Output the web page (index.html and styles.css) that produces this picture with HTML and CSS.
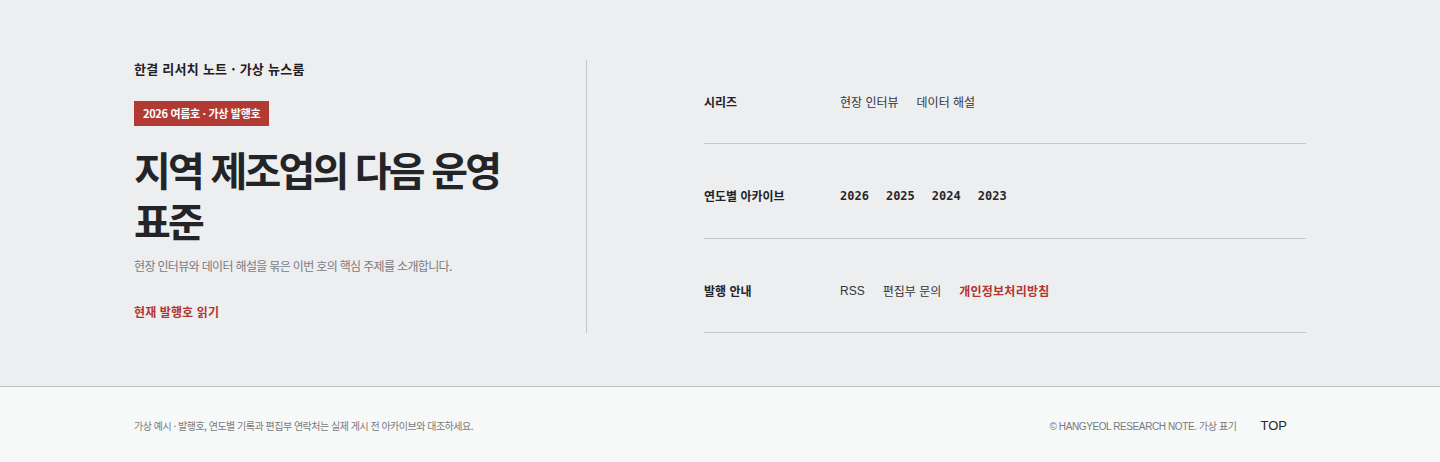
FILE: index.html
```html
<!DOCTYPE html>
<html lang="ko">
<head>
<meta charset="utf-8">
<title>한결 리서치 노트</title>
<link rel="stylesheet" href="styles.css">
</head>
<body>
<main class="hero">
  <div class="container grid">
    <section class="intro">
      <p class="brand">한결 리서치 노트 · 가상 뉴스룸</p>
      <span class="badge">2026 여름호 · 가상 발행호</span>
      <h1 class="title">지역 제조업의 다음 운영 표준</h1>
      <p class="lead">현장 인터뷰와 데이터 해설을 묶은 이번 호의 핵심 주제를 소개합니다.</p>
      <a class="cta" href="#">현재 발행호 읽기</a>
    </section>
    <nav class="index">
      <div class="row">
        <span class="label">시리즈</span>
        <div class="links">
          <a href="#">현장 인터뷰</a>
          <a href="#">데이터 해설</a>
        </div>
      </div>
      <div class="row">
        <span class="label">연도별 아카이브</span>
        <div class="links years">
          <a href="#">2026</a>
          <a href="#">2025</a>
          <a href="#">2024</a>
          <a href="#">2023</a>
        </div>
      </div>
      <div class="row">
        <span class="label">발행 안내</span>
        <div class="links">
          <a href="#" class="latin">RSS</a>
          <a href="#">편집부 문의</a>
          <a href="#" class="strong">개인정보처리방침</a>
        </div>
      </div>
    </nav>
  </div>
</main>
<footer class="footer">
  <div class="container foot">
    <p class="note">가상 예시 · 발행호, 연도별 기록과 편집부 연락처는 실제 게시 전 아카이브와 대조하세요.</p>
    <div class="foot-right">
      <span class="copy">© HANGYEOL RESEARCH NOTE. 가상 표기</span>
      <a href="#" class="top">TOP</a>
    </div>
  </div>
</footer>
</body>
</html>
```
FILE: styles.css
```css
* { box-sizing: border-box; }
html, body { margin: 0; padding: 0; }
body {
  font-family: "Noto Sans CJK KR", "Noto Sans", sans-serif;
  color: #222326;
  background: #f7f8f8;
}
a { text-decoration: none; color: inherit; }
p { margin: 0; }

.container {
  width: 1172px;
  margin: 0 auto;
}

.hero {
  background: #edeef0;
  border-bottom: 1px solid #bfc0c3;
  padding: 60px 0 53px;
}

.grid {
  display: grid;
  grid-template-columns: 453px 1fr;
  column-gap: 117px;
}

.intro {
  border-right: 1px solid #c4c5c8;
  padding-right: 40px;
  display: flex;
  flex-direction: column;
  align-items: flex-start;
}

.brand {
  font-size: 13px;
  font-weight: 700;
  line-height: 18px;
  letter-spacing: 0.02em;
  color: #1f2023;
}

.badge {
  margin-top: 23px;
  display: inline-block;
  background: #b23a35;
  color: #fff;
  font-size: 11px;
  font-weight: 700;
  line-height: 25px;
  height: 25px;
  padding: 0 9px;
  letter-spacing: -0.03em;
}

.title {
  margin: 18px 0 0;
  font-size: 40px;
  line-height: 51px;
  font-weight: 700;
  letter-spacing: -0.07em;
  word-break: keep-all;
  color: #232428;
}

.lead {
  margin-top: 10px;
  font-size: 12px;
  line-height: 20px;
  color: #7a7b7f;
  letter-spacing: -0.055em;
}

.cta {
  margin-top: 26px;
  font-size: 12px;
  line-height: 20px;
  font-weight: 700;
  color: #b2342e;
  letter-spacing: 0.01em;
}

.index {
  display: flex;
  flex-direction: column;
  padding-top: 2px;
}

.row {
  display: grid;
  grid-template-columns: 136px 1fr;
  align-items: center;
  padding: 30px 0 31px;
  border-bottom: 1px solid #c6c7ca;
  font-size: 12px;
  line-height: 20px;
}
.row + .row { padding: 42px 0 32px; }
.row:last-child { padding-bottom: 31px; }

.label {
  font-weight: 700;
  color: #222326;
  letter-spacing: 0;
}

.links {
  display: flex;
  gap: 18px;
  color: #34353a;
  letter-spacing: 0;
}

.years { gap: 17px; }

.years a {
  font-family: "DejaVu Sans Mono", "Liberation Mono", monospace;
  font-weight: 700;
  font-size: 12px;
  letter-spacing: 0;
  color: #26272b;
}

.links .latin {
  font-family: "Liberation Sans", Arial, sans-serif;
  font-size: 12px;
  letter-spacing: 0;
}

.links .strong {
  color: #b2342e;
  font-weight: 700;
  letter-spacing: 0.02em;
}

.footer { background: #f7f8f8; }

.foot {
  display: flex;
  justify-content: space-between;
  align-items: center;
  height: 76px;
}

.note {
  font-size: 10px;
  color: #77787c;
  letter-spacing: -0.05em;
}

.foot-right {
  display: flex;
  align-items: center;
  gap: 24px;
  padding-right: 19px;
}

.copy {
  font-family: "Liberation Sans", "Noto Sans CJK KR", sans-serif;
  font-size: 10px;
  letter-spacing: -0.04em;
  color: #77787c;
}

.top {
  font-family: "Liberation Sans", Arial, sans-serif;
  font-size: 13px;
  color: #26272b;
}
```
